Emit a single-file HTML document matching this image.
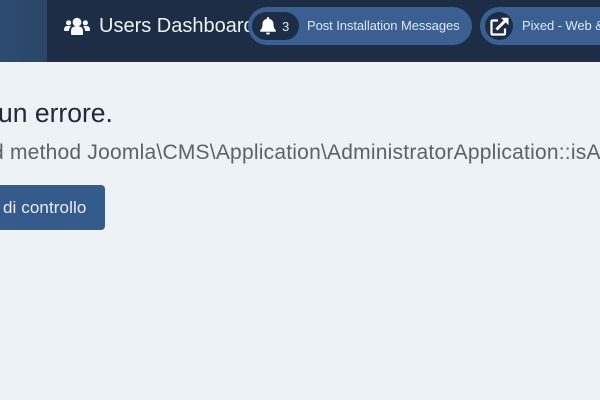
<!DOCTYPE html>
<html lang="it">
<head>
<meta charset="utf-8">
<title>Users Dashboard</title>
<style>
html,body{margin:0;padding:0;width:600px;height:400px;overflow:hidden;background:#edf2f7;font-family:"Liberation Sans",sans-serif}
#wrap{position:relative;width:600px;height:400px;overflow:hidden}
.a{position:absolute;white-space:nowrap}
#hdr{left:0;top:0;width:600px;height:62px;background:#1c2d45}
#side{left:0;top:0;width:47px;height:62px;background:linear-gradient(90deg,#2c4a70,#2a4768)}
.pill{height:38px;top:7px;background:#3a5f90;border-radius:19px}
.circ{background:#1c2d45;border-radius:14px;height:28px;top:12px}
.lbl{color:#dfe7f1;font-size:13px;top:18px;line-height:15px;letter-spacing:-.08px}
</style>
</head>
<body>
<div id="wrap">
<div class="a" id="hdr"></div>
<div class="a" id="side"></div>

<svg class="a" style="left:64px;top:17px" width="26" height="19" viewBox="0 0 26 19" fill="#f4f6f9">
<circle cx="13" cy="5.2" r="4.4"/>
<circle cx="4.6" cy="5.8" r="2.6"/>
<circle cx="21.400" cy="5.8" r="2.6"/>
<path d="M7 17v-3c0-2.800 2-4.600 4-4.600h4c2 0 4 1.800 4 4.600v3c0 .7-.5 1-1 1H8c-.5 0-1-.3-1-1z"/>
<path d="M0 12.500c0-2 1.200-3.500 3-3.500h2.500c.6 0 1.100.2 1.500.5-1.300 1-2 2.600-2.200 4.500H1c-.6 0-1-.4-1-1z"/>
<path d="M26 12.500c0-2-1.200-3.500-3-3.500h-2.500c-.6 0-1.100.2-1.500.5 1.300 1 2 2.600 2.200 4.500H25c.6 0 1-.4 1-1z"/>
</svg>
<div class="a" style="left:99px;top:15px;color:#eef1f6;font-size:20px;line-height:23px">Users Dashboard</div>

<div class="a pill" style="left:248px;width:224px"></div>
<div class="a circ" style="left:252px;width:47px"></div>
<svg class="a" style="left:260px;top:17px" width="16" height="18" viewBox="0 0 16 18" fill="#fff">
<path d="M8 0c-.7 0-1.200.5-1.200 1.200v.7C4.200 2.400 2.500 4.500 2.500 7c0 3.500-1 5-2.200 6.200-.5.600-.1 1.600.7 1.600h14c.8 0 1.200-1 .7-1.600C14.500 12 13.500 10.500 13.500 7c0-2.500-1.700-4.600-4.300-5.100v-.7C9.200.5 8.700 0 8 0z"/>
<path d="M6 15.600h4c0 1.200-.9 2-2 2s-2-.8-2-2z"/>
</svg>
<div class="a" style="left:282px;top:19px;color:#dfe6ef;font-size:13px;line-height:15px">3</div>
<div class="a lbl" style="left:307px">Post Installation Messages</div>

<div class="a pill" style="left:480px;width:140px"></div>
<div class="a" style="left:485px;top:12px;width:28px;height:28px;border-radius:50%;background:#1c2d45"></div>
<svg class="a" style="left:490px;top:17px" width="19" height="19" viewBox="0 0 19 19" fill="none" stroke="#fff">
<path d="M8 3.500H2.500a1 1 0 0 0-1 1v12a1 1 0 0 0 1 1h11.500a1 1 0 0 0 1-1V11.500" stroke-width="2.200"/>
<path d="M6.500 12.500L15 4" stroke-width="3"/>
<path d="M11 .8h7.500v7.500z" fill="#fff" stroke="none"/>
</svg>
<div class="a lbl" style="left:522px">Pixed - Web &amp; Media</div>

<div class="a" style="left:-2px;top:98px;color:#22293b;font-size:26.5px;line-height:30px">un errore.</div>
<div class="a" style="left:-8px;top:140px;color:#5c6269;font-size:21px;line-height:25px;letter-spacing:.22px">d method Joomla\CMS\Application\AdministratorApplication::isA</div>

<div class="a" style="left:-40px;top:185px;width:145px;height:45px;background:#345b8c;border-radius:4px"></div>
<div class="a" style="left:3px;top:198px;color:#e8eef5;font-size:17px;line-height:20px;letter-spacing:.1px">di controllo</div>
</div>
</body>
</html>
